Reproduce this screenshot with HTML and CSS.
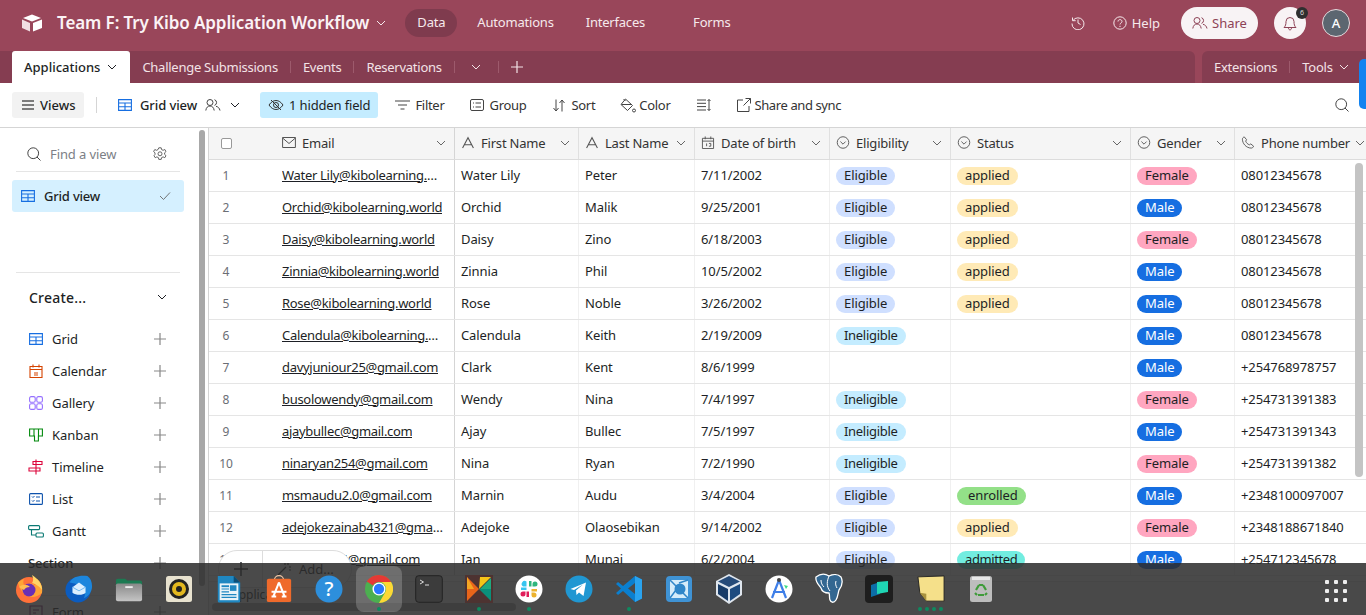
FILE: index.html
```html
<!DOCTYPE html>
<html lang="en">

<head>
    <meta charset="UTF-8">
    <meta name="viewport" content="width=device-width, initial-scale=1.0">
    <title>Team F: Try Kibo Application Workflow</title>
    <link rel="stylesheet" href="styles.css">
</head>

<body>
    <svg class="defs" width="0" height="0">
        <symbol id="chev" viewBox="0 0 12 12"><path d="M2 4l4 4 4-4" fill="none" stroke="currentColor" stroke-width="1"/></symbol>
        <symbol id="plus" viewBox="0 0 12 12"><path d="M6 0v12M0 6h12" fill="none" stroke="currentColor" stroke-width="1.2"/></symbol>
        <symbol id="gridicon" viewBox="0 0 14 12"><path d="M.6.6h12.8v10.8H.6zM.6 4h12.8M.6 7.7h12.8M7 4v7.4" fill="none" stroke="currentColor" stroke-width="1.1"/></symbol>
        <symbol id="texticon" viewBox="0 0 12 12"><path d="M1 11L6 1.5 11 11M2.8 8h6.4" fill="none" stroke="currentColor" stroke-width="1"/></symbol>
        <symbol id="selecticon" viewBox="0 0 14 14"><circle cx="7" cy="7" r="6.2" fill="none" stroke="currentColor"/><path d="M4.2 6l2.8 2.8L9.8 6" fill="none" stroke="currentColor"/></symbol>
        <symbol id="people" viewBox="0 0 16 14"><circle cx="5" cy="4.5" r="3" fill="none" stroke="currentColor"/><path d="M.8 12.5c.4-3 2-4.5 4.200-4.500s3.800 1.500 4.200 4.500M9.500 1.700a3 3 0 0 1 0 5.700M11 8.300c2 .4 3.500 1.800 4 4.200" fill="none" stroke="currentColor"/></symbol>
    </svg>

    <div class="app">
        <header class="topbar">
            <svg class="logo" viewBox="0 0 22 18" width="22" height="18">
                <path d="M11 .5L2 4l9 3.500L20 4z" fill="#fff"/>
                <path d="M12 9v8.500l9-3.500V5.500z" fill="#fff"/>
                <path d="M1 5.500V14l8 3.500V9z" fill="#f2dfe4"/>
            </svg>
            <span class="base-title">Team F: Try Kibo Application Workflow</span>
            <svg class="icon12 title-chev"><use href="#chev"/></svg>
            <nav class="topnav">
                <a class="active">Data</a>
                <a>Automations</a>
                <a>Interfaces</a>
                <i class="nav-sep"></i>
                <a>Forms</a>
            </nav>
            <div class="top-right">
                <svg class="history" viewBox="0 0 14 14" width="14" height="14"><path d="M2 4.500A6 6 0 1 1 1 7.500M1.500 1.500v3.200h3.200M7 3.500V7l2.500 1.500" fill="none" stroke="currentColor"/></svg>
                <span class="help">
                    <svg viewBox="0 0 14 14" width="14" height="14"><circle cx="7" cy="7" r="6.200" fill="none" stroke="currentColor"/><path d="M5 5.500C5 3 9 3 9 5.500 9 7 7 7 7 8.500M7 9.800v1.200" fill="none" stroke="currentColor"/></svg>
                    Help
                </span>
                <button class="share-btn"><svg class="people16"><use href="#people"/></svg>Share</button>
                <span class="bell">
                    <svg viewBox="0 0 14 16" width="14" height="16"><path d="M1 12.500h12c-1.500-1.500-2-3-2-6a4 4 0 0 0-8 0c0 3-.5 4.500-2 6zM5.500 13c0 2.500 3 2.500 3 0" fill="none" stroke="#8d4256"/></svg>
                    <span class="badge">6</span>
                </span>
                <span class="avatar">A</span>
            </div>
        </header>

        <div class="tabbar">
            <div class="tabs">
                <a class="tab active">Applications <svg class="icon12"><use href="#chev"/></svg></a>
                <a class="tab">Challenge Submissions</a>
                <a class="tab sep">Events</a>
                <a class="tab sep">Reservations</a>
                <a class="tab sep tab-more"><svg class="icon12"><use href="#chev"/></svg></a>
                <a class="tab sep tab-plus"><svg class="icon12"><use href="#plus"/></svg></a>
            </div>
            <div class="tabs-right">
                <a>Extensions</a>
                <a class="sep">Tools <svg class="icon12"><use href="#chev"/></svg></a>
            </div>
        </div>

        <div class="toolbar">
            <button class="views-btn">
                <svg viewBox="0 0 12 10" width="12" height="10"><path d="M0 1h12M0 5h12M0 9h12" stroke="#555" stroke-width="1.300"/></svg>
                Views
            </button>
            <i class="tool-sep"></i>
            <span class="gridview">
                <svg class="blue grid14"><use href="#gridicon"/></svg>
                Grid view
                <svg class="people16"><use href="#people"/></svg>
                <svg class="icon12"><use href="#chev"/></svg>
            </span>
            <span class="tool hidden-field">
                <svg viewBox="0 0 16 12" width="16" height="12"><path d="M1 6c2-3 4.500-4.500 7-4.500S13 3 15 6c-2 3-4.500 4.500-7 4.500S3 9 1 6z" fill="none" stroke="#333"/><circle cx="8" cy="6" r="2.500" fill="none" stroke="#333"/><path d="M3 1l10 10" stroke="#333"/></svg>
                1 hidden field
            </span>
            <span class="tool">
                <svg viewBox="0 0 15 10" width="15" height="10"><path d="M0 1h15M3 5h9M5.500 9h4" stroke="#444" stroke-width="1.200"/></svg>
                Filter
            </span>
            <span class="tool">
                <svg viewBox="0 0 14 12" width="14" height="12"><rect x=".5" y=".5" width="13" height="11" rx="1.500" fill="none" stroke="#444"/><path d="M3 4h1M5.500 4H11M3 8h1M5.500 8H11" stroke="#444"/></svg>
                Group
            </span>
            <span class="tool tool-sort">
                <svg viewBox="0 0 14 13" width="14" height="13"><path d="M4 .5v11M1.500 9L4 12l2.500-3M10 12.500v-11M7.500 4L10 1l2.500 3" fill="none" stroke="#444"/></svg>
                Sort
            </span>
            <span class="tool tool-color">
                <svg viewBox="0 0 16 15" width="16" height="15"><path d="M5.500 1l7 6.500-5 5L1 6.500zM3.500 1l2 2M1.500 6.500h10" fill="none" stroke="#444"/><circle cx="14" cy="12.500" r="1.500" fill="none" stroke="#444"/></svg>
                Color
            </span>
            <span class="tool tool-density">
                <svg viewBox="0 0 14 12" width="14" height="12"><path d="M0 1h9M0 4.300h9M0 7.600h9M0 11h9M12 .5v11M10.500 2L12 .5 13.500 2M10.500 10L12 11.500 13.500 10" fill="none" stroke="#444"/></svg>
            </span>
            <span class="tool tool-share">
                <svg viewBox="0 0 14 14" width="14" height="14"><path d="M6 2H.5v11.500H12V8M8.500.5h5v5M13.500.5L6.500 7.500" fill="none" stroke="#444"/></svg>
                Share and sync
            </span>
            <svg class="tool-search" viewBox="0 0 14 14" width="14" height="14"><circle cx="6.200" cy="6.200" r="5.400" fill="none" stroke="#444"/><path d="M10 10l3.500 3.500" stroke="#444"/></svg>
        </div>

        <div class="main">
            <aside class="sidebar">
                <div class="find">
                    <svg viewBox="0 0 14 14" width="14" height="14"><circle cx="6.200" cy="6.200" r="5.400" fill="none" stroke="#444"/><path d="M10 10l3.500 3.500" stroke="#444"/></svg>
                    <span>Find a view</span>
                    <svg class="gear" viewBox="0 0 14 14" width="14" height="14"><path d="M5.800.8h2.400l.4 1.800 1.500.7 1.700-.8 1.200 2-1.400 1.300v1.600l1.400 1.300-1.200 2-1.700-.8-1.500.7-.4 1.800H5.800l-.4-1.800-1.500-.7-1.700.8-1.200-2L2 7.400V5.800L.6 4.500l1.200-2 1.700.8 1.500-.7z" fill="none" stroke="#555" stroke-width=".9"/><circle cx="7" cy="6.800" r="2" fill="none" stroke="#555" stroke-width=".9"/></svg>
                </div>
                <a class="view-item">
                    <svg class="blue grid14"><use href="#gridicon"/></svg>
                    Grid view
                    <svg class="view-check" viewBox="0 0 12 10" width="12" height="10"><path d="M1 5l3.500 3.500L11 1.500" fill="none" stroke="#666" stroke-width=".9"/></svg>
                </a>
                <div class="create">
                    <div class="create-head">Create... <svg class="icon12"><use href="#chev"/></svg></div>
                    <div class="create-item"><svg class="blue grid14"><use href="#gridicon"/></svg><span>Grid</span><svg class="add"><use href="#plus"/></svg></div>
                    <div class="create-item"><svg viewBox="0 0 14 14" width="14" height="14"><path d="M1 2.500h12v11H1zM1 5.500h12M4 .5v3M10 .5v3M5 9h4M5 11h4" fill="none" stroke="#d54401" stroke-width="1.100"/></svg><span>Calendar</span><svg class="add"><use href="#plus"/></svg></div>
                    <div class="create-item"><svg viewBox="0 0 14 14" width="14" height="14"><g fill="none" stroke="#7c4dff" stroke-width="1.100" opacity=".8"><rect x=".6" y=".6" width="5.600" height="5.600" rx="1.500"/><rect x="7.800" y=".6" width="5.600" height="5.600" rx="1.500"/><rect x=".6" y="7.800" width="5.600" height="5.600" rx="1.500"/><rect x="7.800" y="7.800" width="5.600" height="5.600" rx="1.500"/></g></svg><span>Gallery</span><svg class="add"><use href="#plus"/></svg></div>
                    <div class="create-item"><svg viewBox="0 0 14 14" width="14" height="14"><path d="M.6 1h12.800v7h-4v5H5.500V8H.6zM5 1v7M9.500 1v7" fill="none" stroke="#048a0e" stroke-width="1.100"/></svg><span>Kanban</span><svg class="add"><use href="#plus"/></svg></div>
                    <div class="create-item"><svg class="wide" viewBox="0 0 16 16" width="16" height="16"><path d="M8 .5v15M5 2.500h9v3H5zM1 9h11v3H1z" fill="none" stroke="#dc043b" stroke-width="1.100"/></svg><span>Timeline</span><svg class="add"><use href="#plus"/></svg></div>
                    <div class="create-item"><svg viewBox="0 0 14 12" width="14" height="12"><rect x=".6" y=".6" width="12.800" height="10.800" rx="1" fill="none" stroke="#0d52ac" stroke-width="1.100"/><path d="M3 3.500l1 1 1.500-1.500M3 7.500l1 1L5.500 7M7 4h4M7 8h4" fill="none" stroke="#0d52ac"/></svg><span>List</span><svg class="add"><use href="#plus"/></svg></div>
                    <div class="create-item"><svg class="wide" viewBox="0 0 16 13" width="16" height="13"><rect x=".6" y=".6" width="11" height="4" rx="1" fill="none" stroke="#0b7a74" stroke-width="1.100"/><rect x="8" y="8" width="7.400" height="4" rx="1" fill="none" stroke="#0b7a74" stroke-width="1.100"/><path d="M3.500 4.600V10H8" fill="none" stroke="#0b7a74" stroke-width="1.100"/></svg><span>Gantt</span><svg class="add"><use href="#plus"/></svg></div>
                    <div class="create-item section"><span>Section</span><svg class="add"><use href="#plus"/></svg></div>
                    <div class="create-item form-item"><svg viewBox="0 0 14 14" width="14" height="14"><path d="M1 1h12v12H1zM4 5h6M4 8h3" fill="none" stroke="#7c1a6b" stroke-width="1.100"/></svg><span>Form</span><svg class="add"><use href="#plus"/></svg></div>
                </div>
                <i class="side-scroll"></i>
            </aside>

            <section class="grid">
                <div class="row head">
                    <div class="cell c-num"><i class="checkbox"></i></div>
                    <div class="cell c-email"><svg class="field" viewBox="0 0 14 12"><path d="M.6 1h12.800v10H.6zM.6 1.500L7 7l6.400-5.500" fill="none" stroke="currentColor"/></svg>Email<svg class="icon12 hchev"><use href="#chev"/></svg></div>
                    <div class="cell"><svg class="field"><use href="#texticon"/></svg>First Name<svg class="icon12 hchev"><use href="#chev"/></svg></div>
                    <div class="cell"><svg class="field"><use href="#texticon"/></svg>Last Name<svg class="icon12 hchev"><use href="#chev"/></svg></div>
                    <div class="cell"><svg class="field" viewBox="0 0 14 14"><path d="M1 2.500h12v11H1zM1 5.500h12M4 .5v3M10 .5v3M5.500 8v3M8 8h2v3H8" fill="none" stroke="currentColor"/></svg>Date of birth<svg class="icon12 hchev"><use href="#chev"/></svg></div>
                    <div class="cell"><svg class="field"><use href="#selecticon"/></svg>Eligibility<svg class="icon12 hchev"><use href="#chev"/></svg></div>
                    <div class="cell"><svg class="field"><use href="#selecticon"/></svg>Status<svg class="icon12 hchev"><use href="#chev"/></svg></div>
                    <div class="cell"><svg class="field"><use href="#selecticon"/></svg>Gender<svg class="icon12 hchev"><use href="#chev"/></svg></div>
                    <div class="cell"><svg class="field" viewBox="0 0 14 14"><path d="M3 1l2.500 3-1 1.500c.8 2 2 3.200 4 4l1.500-1 3 2.500c-.5 1.500-1.500 2-2.500 2C5 13 1 8 1 3.500 1 2.500 1.500 1.500 3 1z" fill="none" stroke="currentColor"/></svg>Phone number<svg class="icon12 hchev"><use href="#chev"/></svg></div>
                </div>

                <div class="row"><div class="cell c-num">1</div><div class="cell c-email"><a>Water Lily@kibolearning.world</a></div><div class="cell">Water Lily</div><div class="cell">Peter</div><div class="cell">7/11/2002</div><div class="cell"><span class="pill eligible">Eligible</span></div><div class="cell"><span class="pill applied">applied</span></div><div class="cell"><span class="pill female">Female</span></div><div class="cell">08012345678</div></div>
                <div class="row"><div class="cell c-num">2</div><div class="cell c-email"><a>Orchid@kibolearning.world</a></div><div class="cell">Orchid</div><div class="cell">Malik</div><div class="cell">9/25/2001</div><div class="cell"><span class="pill eligible">Eligible</span></div><div class="cell"><span class="pill applied">applied</span></div><div class="cell"><span class="pill male">Male</span></div><div class="cell">08012345678</div></div>
                <div class="row"><div class="cell c-num">3</div><div class="cell c-email"><a>Daisy@kibolearning.world</a></div><div class="cell">Daisy</div><div class="cell">Zino</div><div class="cell">6/18/2003</div><div class="cell"><span class="pill eligible">Eligible</span></div><div class="cell"><span class="pill applied">applied</span></div><div class="cell"><span class="pill female">Female</span></div><div class="cell">08012345678</div></div>
                <div class="row"><div class="cell c-num">4</div><div class="cell c-email"><a>Zinnia@kibolearning.world</a></div><div class="cell">Zinnia</div><div class="cell">Phil</div><div class="cell">10/5/2002</div><div class="cell"><span class="pill eligible">Eligible</span></div><div class="cell"><span class="pill applied">applied</span></div><div class="cell"><span class="pill male">Male</span></div><div class="cell">08012345678</div></div>
                <div class="row"><div class="cell c-num">5</div><div class="cell c-email"><a>Rose@kibolearning.world</a></div><div class="cell">Rose</div><div class="cell">Noble</div><div class="cell">3/26/2002</div><div class="cell"><span class="pill eligible">Eligible</span></div><div class="cell"><span class="pill applied">applied</span></div><div class="cell"><span class="pill male">Male</span></div><div class="cell">08012345678</div></div>
                <div class="row"><div class="cell c-num">6</div><div class="cell c-email"><a>Calendula@kibolearning.world</a></div><div class="cell">Calendula</div><div class="cell">Keith</div><div class="cell">2/19/2009</div><div class="cell"><span class="pill ineligible">Ineligible</span></div><div class="cell"></div><div class="cell"><span class="pill male">Male</span></div><div class="cell">08012345678</div></div>
                <div class="row"><div class="cell c-num">7</div><div class="cell c-email"><a>davyjuniour25@gmail.com</a></div><div class="cell">Clark</div><div class="cell">Kent</div><div class="cell">8/6/1999</div><div class="cell"></div><div class="cell"></div><div class="cell"><span class="pill male">Male</span></div><div class="cell">+254768978757</div></div>
                <div class="row"><div class="cell c-num">8</div><div class="cell c-email"><a>busolowendy@gmail.com</a></div><div class="cell">Wendy</div><div class="cell">Nina</div><div class="cell">7/4/1997</div><div class="cell"><span class="pill ineligible">Ineligible</span></div><div class="cell"></div><div class="cell"><span class="pill female">Female</span></div><div class="cell">+254731391383</div></div>
                <div class="row"><div class="cell c-num">9</div><div class="cell c-email"><a>ajaybullec@gmail.com</a></div><div class="cell">Ajay</div><div class="cell">Bullec</div><div class="cell">7/5/1997</div><div class="cell"><span class="pill ineligible">Ineligible</span></div><div class="cell"></div><div class="cell"><span class="pill male">Male</span></div><div class="cell">+254731391343</div></div>
                <div class="row"><div class="cell c-num">10</div><div class="cell c-email"><a>ninaryan254@gmail.com</a></div><div class="cell">Nina</div><div class="cell">Ryan</div><div class="cell">7/2/1990</div><div class="cell"><span class="pill ineligible">Ineligible</span></div><div class="cell"></div><div class="cell"><span class="pill female">Female</span></div><div class="cell">+254731391382</div></div>
                <div class="row"><div class="cell c-num">11</div><div class="cell c-email"><a>msmaudu2.0@gmail.com</a></div><div class="cell">Marnin</div><div class="cell">Audu</div><div class="cell">3/4/2004</div><div class="cell"><span class="pill eligible">Eligible</span></div><div class="cell"><span class="pill enrolled">enrolled</span></div><div class="cell"><span class="pill male">Male</span></div><div class="cell">+2348100097007</div></div>
                <div class="row"><div class="cell c-num">12</div><div class="cell c-email"><a>adejokezainab4321@gmail.com</a></div><div class="cell">Adejoke</div><div class="cell">Olaosebikan</div><div class="cell">9/14/2002</div><div class="cell"><span class="pill eligible">Eligible</span></div><div class="cell"><span class="pill applied">applied</span></div><div class="cell"><span class="pill female">Female</span></div><div class="cell">+2348188671840</div></div>
                <div class="row"><div class="cell c-num">13</div><div class="cell c-email"><a>ian.munai5@gmail.com</a></div><div class="cell">Ian</div><div class="cell">Munai</div><div class="cell">6/2/2004</div><div class="cell"><span class="pill eligible">Eligible</span></div><div class="cell"><span class="pill admitted">admitted</span></div><div class="cell"><span class="pill male">Male</span></div><div class="cell">+254712345678</div></div>

                <div class="grid-foot">Applicants</div>
                <div class="add-pill">
                    <span class="add-plus"><svg class="icon14"><use href="#plus"/></svg></span>
                    <span class="add-text">
                        <svg viewBox="0 0 14 14" width="14" height="14"><path d="M1 13l8-8M8 1v2M11 1v2M12 5h2M12 8h2" fill="none" stroke="#333" stroke-width="1.200"/></svg>
                        Add...
                    </span>
                </div>
                <i class="grid-scroll"></i>
                <i class="h-scroll"></i>
            </section>
        </div>

        <i class="support-tab"></i>

        <footer class="dock">
            <span class="slot"><svg viewBox="0 0 28 28"><circle cx="14" cy="15" r="13" fill="#ff7139"/><path d="M3 8c3 12 14 19 24 10 1-6-1-11-5-14 1 3 0 5-2 6C16 7 12 8 10 11 8 9 8 7 9 4 6 5 4 6 3 8z" fill="#ffa436"/><path d="M17 0c5 3 10 8 10 15-3-4-6-6-10-7 2-3 1-5 0-8z" fill="#ffd567"/><circle cx="14" cy="15" r="6.500" fill="#6a2fb5"/><path d="M4 12c4-3 8-3 11 0-3 0-5 1-6 3z" fill="#ffbd4f"/></svg></span>
            <span class="slot"><svg viewBox="0 0 30 30"><circle cx="14" cy="16" r="13.500" fill="#0b5cc0"/><path d="M5 8C8 2 15 0 24 1c3 2 5 6 5 11 0 6-4 11-9 13C24 18 20 10 5 8z" fill="#1c86dd"/><path d="M8 13l7-5 7 5v6c-3 3-10 3-14 0z" fill="#dcefff"/><path d="M8 13l7 4 7-4" fill="none" stroke="#6db6ee"/></svg></span>
            <span class="slot"><svg viewBox="0 0 30 28"><path d="M1 5a2 2 0 0 1 2-2h8l2 2h14a2 2 0 0 1 2 2v4H1z" fill="#1c7a52"/><rect x="1" y="8" width="28" height="19" rx="2" fill="url(#folder)"/><rect x="11" y="11" width="8" height="2" fill="#eee"/><defs><linearGradient id="folder" x1="0" y1="0" x2="0" y2="1"><stop offset="0" stop-color="#888"/><stop offset="1" stop-color="#c4c4c4"/></linearGradient></defs></svg></span>
            <span class="slot"><svg viewBox="0 0 28 28"><rect x="1" y="1" width="26" height="26" rx="2.500" fill="#e8e2cf"/><circle cx="14" cy="14" r="10" fill="#222"/><circle cx="14" cy="14" r="7" fill="#e3b81f"/><circle cx="14" cy="14" r="3" fill="#222"/></svg></span>
            <span class="slot"><svg viewBox="0 0 28 30"><path d="M2 1h17l7 7v20a1.500 1.500 0 0 1-1.500 1.500h-21A1.500 1.500 0 0 1 2 28z" fill="#1f87c1"/><path d="M19 1l7 7h-7z" fill="#0b4e77"/><rect x="4" y="9" width="20" height="18" fill="#e9f3f8"/><rect x="6" y="11" width="8" height="2" fill="#1f87c1"/><rect x="15" y="11" width="7" height="6" fill="#1f87c1"/><path d="M6 15h8M6 18h8M6 21h16M6 24h16" stroke="#1f87c1" stroke-width="1.300"/></svg></span>
            <span class="slot"><svg viewBox="0 0 28 30"><path d="M9 6c0-7 10-7 10 0" fill="none" stroke="#f4c7a3" stroke-width="1.300"/><rect x="1" y="4" width="26" height="25" rx="2" fill="#ef6a2b"/><path d="M14 8l-6 15M14 8l6 15M6 18h16M6 23h5M17 23h5" fill="none" stroke="#fff" stroke-width="2.200"/></svg></span>
            <span class="slot"><svg viewBox="0 0 28 28"><circle cx="14" cy="14" r="13.500" fill="#2d8fdc"/><text class="dock-q" x="14" y="21" text-anchor="middle">?</text></svg></span>
            <span class="slot running on"><svg viewBox="0 0 30 30"><circle cx="15" cy="15" r="15" fill="#4caf50"/><path d="M15 0a15 15 0 0 1 13 7.500H15a7.500 7.500 0 0 0-6.500 3.750L2 7a15 15 0 0 1 13-7z" fill="#e53935"/><path d="M28 7.500A15 15 0 0 1 15 30l6.500-11.250A7.500 7.500 0 0 0 15 7.500z" fill="#fdd835"/><circle cx="15" cy="15" r="7" fill="#fff"/><circle cx="15" cy="15" r="5.500" fill="#2979ff"/></svg></span>
            <span class="slot"><svg viewBox="0 0 28 28"><rect x=".7" y=".7" width="26.600" height="26.600" rx="3" fill="#3c3c3c" stroke="#222"/><path d="M5 5l3.500 2L5 9M10 10h4" fill="none" stroke="#ddd"/></svg></span>
            <span class="slot running"><svg viewBox="0 0 28 28"><rect width="28" height="28" fill="#4d3331"/><path d="M2 2l12 12L2 26z" fill="#e8651a"/><path d="M2 2v12h7z" fill="#f5a623"/><path d="M14 14L26 2H15z" fill="#f5c518"/><path d="M14 14l12 12V14z" fill="#0a8f7a"/><path d="M26 3v11H15z" fill="#1fa87f"/></svg></span>
            <span class="slot running"><svg viewBox="0 0 28 28"><circle cx="14" cy="14" r="13.500" fill="#fff"/><path d="M11.500 6.500v5h-3.500a2.500 2.500 0 0 1 3.500-5z" fill="#36c5f0"/><path d="M6 12.500h5.500v2.500H6z" fill="#36c5f0"/><path d="M16.500 6v5.500H14V6z" fill="#2eb67d"/><path d="M17.500 11.500V9a2.500 2.500 0 1 1 2.500 2.500z" fill="#2eb67d"/><path d="M22 16.500h-5.500V14H22z" fill="#ecb22e"/><path d="M16.500 17.500H19a2.500 2.500 0 1 1-2.500 2.500z" fill="#ecb22e"/><path d="M11.500 22V16.500H14V22z" fill="#e01e5a"/><path d="M10.500 16.500V19a2.500 2.500 0 1 1-2.500-2.500z" fill="#e01e5a"/></svg></span>
            <span class="slot"><svg viewBox="0 0 28 28"><circle cx="14" cy="14" r="13.500" fill="#2097d2"/><path d="M5.500 14L21 7.500 18.500 21l-4.500-3.500-2.500 2.500-.5-4.500 7-6-9 5.500z" fill="#fff"/></svg></span>
            <span class="slot running"><svg viewBox="0 0 28 28"><path d="M20 1l7 3.500v19L20 27 8 16l-5 4-2-2 5-4.500L1 9l2-2 5 4z" fill="#0a7fcf"/><path d="M20 1l7 3.500v19L20 27z" fill="#2aa3ee"/><path d="M20 8l-7 5.500L20 19z" fill="#4a4a4a"/></svg></span>
            <span class="slot"><svg viewBox="0 0 28 28"><rect x="1" y="1" width="26" height="26" rx="4" fill="#3f93d5"/><rect x="5" y="5" width="18" height="18" fill="#d5ecfa"/><circle cx="15" cy="14" r="5.500" fill="#2f86c9"/><path d="M5 5l7 7M23 5l-9 3M5 23l6-8M23 23l-7-7" stroke="#2f86c9" stroke-width="1.500"/></svg></span>
            <span class="slot"><svg class="big" viewBox="0 0 30 32"><path d="M15 1l13 7v14l-13 9-13-9V8z" fill="#dfe6ee"/><path d="M15 3l11 5.500L15 14 4 8.500z" fill="#264b79"/><path d="M4 11l10 5v12L4 21z" fill="#183c68"/><path d="M26 11l-10 5v12l10-7z" fill="#1d4b80"/></svg></span>
            <span class="slot"><svg viewBox="0 0 28 28"><circle cx="14" cy="14" r="13.500" fill="#fff"/><path d="M14 5l-7 18M14 5l7 18M8 17h12" fill="none" stroke="#3f7fe8" stroke-width="2.200"/><path d="M19 10l4 1-2 3z" fill="#3ddc84"/><circle cx="14" cy="5" r="2" fill="#444"/></svg></span>
            <span class="slot"><svg class="big" viewBox="0 0 30 32"><path d="M2 4c5-4 10-3 13-1 4-2 9-2 12 1 2 4 1 9-2 13-1 3-1 7-3 10-2 3-5 3-6 0-1-2 0-5-1-7-3 0-7-1-8-5C5 12 1 9 2 4z" fill="#336791" stroke="#fff" stroke-width="1.300"/><path d="M15 3c-2 5-3 10 1 15M22 8c-1 3 0 5 1 7M7 7c0 3 1 5 3 7" fill="none" stroke="#fff"/></svg></span>
            <span class="slot"><svg viewBox="0 0 28 28"><rect width="28" height="28" rx="4" fill="#1e1e1e"/><path d="M6 10l9-3v12l-9 3z" fill="#0c6ea8"/><path d="M12 7l11-1v11l-11 2z" fill="#1fd6b4"/></svg></span>
            <span class="slot sticky running"><svg viewBox="0 0 30 30"><path d="M1 2l28-1v27H10L3 19z" fill="#f5e08a" stroke="#222"/><path d="M3 19l7 1v8z" fill="#a8923f"/></svg></span>
            <span class="slot"><svg viewBox="0 0 24 28"><rect x="1" y="1" width="22" height="26" rx="2.500" fill="#bdbdbd"/><rect x="3" y="2" width="18" height="3" fill="#e8e8e8"/><g fill="none" stroke="#3f9b3a" stroke-width="2.200"><path d="M10 10l-3 5M14 10l3 5M9 20h6M6 18l2 2M18 18l-2 2M10 10h4"/></g></svg></span>
            <span class="apps-grid"><i></i><i></i><i></i><i></i><i></i><i></i><i></i><i></i><i></i></span>
        </footer>
    </div>
</body>

</html>
```

FILE: styles.css
```css
* {
    box-sizing: border-box;
}

html,
body {
    margin: 0;
    height: 100%;
    overflow: hidden;
}

body {
    font-family: "Noto Sans", "Open Sans", sans-serif;
    font-size: 13px;
    color: #1d1f25;
    background: #fff;
}

.defs {
    position: absolute;
}

.app {
    position: relative;
    height: 100vh;
    display: flex;
    flex-direction: column;
    overflow: hidden;
}

svg {
    flex: none;
}

.icon12 {
    width: 12px;
    height: 12px;
}

.icon14 {
    width: 14px;
    height: 14px;
}

.grid14 {
    width: 14px;
    height: 12px;
}

.people16 {
    width: 16px;
    height: 14px;
}

.blue {
    color: #166ee1;
}

/* top bar */
.topbar {
    height: 51px;
    flex: none;
    display: flex;
    align-items: center;
    padding: 0 0 6px 21px;
    background: #99465a;
    color: #f6e9ec;
}

.base-title {
    margin-left: 14px;
    font-size: 17px;
    font-weight: 600;
    letter-spacing: -0.1px;
    color: #fbf3f5;
}

.title-chev {
    margin-left: 6px;
}

.topnav {
    display: flex;
    align-items: center;
    margin-left: 18px;
    letter-spacing: -0.2px;
}

.topnav a {
    padding: 0 12px;
    height: 28px;
    line-height: 26px;
    margin-right: 8px;
    border-radius: 14px;
}

.topnav a.active {
    background: #7f3b4e;
}

.nav-sep {
    width: 1px;
    height: 20px;
    margin: 0 15px 0 0;
}

.top-right {
    margin-left: auto;
    display: flex;
    align-items: center;
    padding-right: 16px;
}

.help {
    display: flex;
    align-items: center;
    gap: 5px;
    margin-left: 28px;
}

.share-btn {
    display: flex;
    align-items: center;
    justify-content: center;
    gap: 4px;
    width: 77px;
    height: 32px;
    margin-left: 21px;
    border: 0;
    border-radius: 16px;
    background: #f8f3f5;
    color: #8d4256;
    font: inherit;
}

.bell {
    position: relative;
    display: flex;
    align-items: center;
    justify-content: center;
    width: 32px;
    height: 32px;
    margin-left: 16px;
    border-radius: 50%;
    background: #f8f3f5;
}

.badge {
    position: absolute;
    top: 0;
    right: -2px;
    width: 12px;
    height: 12px;
    border-radius: 50%;
    background: #2f2f2f;
    color: #ddd;
    font-size: 7px;
    line-height: 12px;
    text-align: center;
}

.avatar {
    width: 28px;
    height: 28px;
    margin-left: 16px;
    border: 1px solid #e6dadd;
    border-radius: 50%;
    background: #5c6670;
    color: #fff;
    font-size: 13px;
    font-weight: 500;
    line-height: 26px;
    text-align: center;
}

/* table tabs */
.tabbar {
    height: 32px;
    flex: none;
    display: flex;
    background: #99465a;
    color: #f3e3e7;
    letter-spacing: -0.26px;
}

.tabs {
    flex: 1;
    display: flex;
    align-items: center;
    padding-left: 12px;
    background: #853d51;
    border-top-right-radius: 6px;
}

.tab {
    display: flex;
    align-items: center;
    height: 32px;
    padding: 0 12px;
    position: relative;
}

.tab.sep {
    padding: 0 12px 0 13px;
}

.tab.active {
    gap: 6px;
    background: #fff;
    color: #1d1f25;
    font-weight: 500;
    letter-spacing: 0;
    border-radius: 3px 3px 0 0;
}

.tab.tab-more {
    padding: 0 16px;
}

.tab.tab-plus {
    padding-left: 13px;
}

.tab.sep::before,
.tabs-right .sep::before {
    content: "";
    position: absolute;
    left: 0;
    top: 10px;
    height: 12px;
    width: 1px;
    background: #9d5a6c;
}

.tabs-right {
    flex: none;
    width: 164px;
    margin-left: 7px;
    display: flex;
    align-items: center;
    padding-left: 12px;
    background: #853d51;
    border-top-left-radius: 6px;
}

.tabs-right a {
    display: flex;
    align-items: center;
    gap: 5px;
    position: relative;
    height: 32px;
}

.tabs-right .sep {
    margin-left: 12px;
    padding-left: 13px;
}

/* view toolbar */
.toolbar {
    height: 45px;
    flex: none;
    display: flex;
    align-items: center;
    padding: 0 17px 0 12px;
    border-bottom: 1px solid #d5d5d5;
    color: #333;
}

.views-btn {
    display: flex;
    align-items: center;
    gap: 6px;
    width: 72px;
    height: 26px;
    padding-left: 10px;
    border: 0;
    border-radius: 3px;
    background: #f2f2f2;
    color: #1d1f25;
    font: inherit;
    font-weight: 500;
}

.tool-sep {
    width: 1px;
    height: 16px;
    margin: 0 21px 0 12px;
    background: #d5d5d5;
}

.gridview {
    display: flex;
    align-items: center;
    gap: 8px;
    font-weight: 500;
    letter-spacing: -0.1px;
    color: #1d1f25;
    margin-right: 19px;
}

.gridview .people16 {
    color: #444;
}

.tool {
    display: flex;
    align-items: center;
    gap: 5px;
    height: 26px;
    margin-right: 26px;
    letter-spacing: -0.3px;
}

.hidden-field {
    padding: 0 8px;
    margin-right: 17px;
    border-radius: 3px;
    background: #c4ecff;
    color: #1d1f25;
    letter-spacing: -0.15px;
}

.tool-sort {
    margin-right: 25px;
}

.tool-color {
    gap: 3px;
}

.tool-density {
    margin-right: 26px;
}

.tool-share {
    gap: 4px;
    letter-spacing: -0.4px;
}

.tool-search {
    margin-left: auto;
}

/* main area */
.main {
    flex: 1;
    min-height: 0;
    display: flex;
}

.sidebar {
    position: relative;
    width: 209px;
    flex: none;
    padding: 3px 24px 0 12px;
    border-right: 1px solid #d5d5d5;
}

.find {
    display: flex;
    align-items: center;
    gap: 9px;
    height: 41px;
    margin: 0 4px;
    padding: 6px 13px 0 11px;
    border-bottom: 1px solid #e5e5e5;
    color: #7c7f86;
    letter-spacing: -0.1px;
}

.gear {
    margin-left: auto;
}

.view-item {
    display: flex;
    align-items: center;
    gap: 9px;
    height: 32px;
    margin-top: 8px;
    padding: 0 13px 0 9px;
    border-radius: 3px;
    background: #d5f0ff;
    font-weight: 500;
    letter-spacing: -0.2px;
}

.view-check {
    margin-left: auto;
}

.create {
    margin: 60px 4px 0;
    border-top: 1px solid #e5e5e5;
}

.create-head {
    display: flex;
    align-items: center;
    justify-content: space-between;
    height: 50px;
    padding: 0 12px 2px 13px;
    font-size: 14px;
    font-weight: 500;
    letter-spacing: 0.2px;
}

.create-item {
    display: flex;
    align-items: center;
    height: 32px;
    padding: 0 14px 0 12px;
    letter-spacing: -0.05px;
}

.create-item span {
    margin-left: 9px;
}

.create-item svg:first-child {
    margin-left: 1px;
}

.create-item svg.wide {
    margin-left: 0;
    margin-right: -1px;
}

.add {
    width: 12px;
    height: 12px;
    margin-left: auto;
    color: #888;
}

.section {
    font-weight: 500;
}

.section span {
    margin-left: 0;
}

.form-item {
    margin-top: 16px;
    border-top: 1px solid #e5e5e5;
}

.side-scroll {
    position: absolute;
    top: 2px;
    left: 199px;
    width: 6px;
    height: 456px;
    border-radius: 3px;
    background: #a8a8a8;
}

/* records */
.grid {
    position: relative;
    flex: 1;
    min-width: 0;
    overflow: hidden;
}

.row {
    display: grid;
    grid-template-columns: 73px 173px 124px 116px 135px 121px 180px 104px 140px;
    height: 32px;
    border-bottom: 1px solid #e5e5e5;
    letter-spacing: -0.1px;
}

.row.head {
    background: #f5f5f5;
    border-bottom-color: #dcdcdc;
    color: #333;
    letter-spacing: -0.2px;
}

.cell {
    display: flex;
    align-items: center;
    min-width: 0;
    padding: 0 6px 2px;
    border-right: 1px solid #f0f0f0;
    white-space: nowrap;
    overflow: hidden;
}

.head .cell {
    padding-right: 7px;
    border-right-color: #e0e0e0;
}

.c-num,
.head .c-num {
    justify-content: center;
    padding: 0 39px 0 0;
    border-right: 0;
    color: #6b6e75;
    font-size: 12px;
}

.c-email {
    padding: 0 9px 2px 0;
    border-right-color: #d5d5d5 !important;
}

.c-email a {
    overflow: hidden;
    text-overflow: ellipsis;
    text-decoration: underline;
    letter-spacing: -0.3px;
}

.checkbox {
    width: 11px;
    height: 11px;
    border: 1px solid #999;
    border-radius: 2px;
    background: #fff;
}

.field {
    width: 14px;
    height: 13px;
    margin-right: 6px;
    color: #555;
}

.hchev {
    margin-left: auto;
    color: #666;
}

.cell:last-child .hchev {
    margin-right: 1px;
}

.pill {
    height: 18px;
    margin-top: 2px;
    line-height: 16px;
    padding: 0 8px;
    border-radius: 9px;
}

.eligible {
    background: #cfdfff;
}

.ineligible {
    background: #c4ecff;
    letter-spacing: -0.3px;
}

.applied {
    background: #ffeab6;
}

.enrolled {
    background: #93e088;
    padding: 0 8px 0 11px;
}

.admitted {
    background: #72ede0;
    letter-spacing: -0.4px;
}

.male {
    background: #166ee1;
    color: #fff;
}

.female {
    background: #ffa6c0;
}

.grid-foot {
    height: 40px;
    margin-top: 5px;
    padding: 4px 0 0 22px;
    border-top: 1px solid #e0e0e0;
    background: #f5f5f5;
    font-size: 12px;
}

.add-pill {
    position: absolute;
    left: 9px;
    top: 422px;
    display: flex;
    align-items: center;
    width: 134px;
    height: 38px;
    border: 1px solid #ddd;
    border-radius: 19px;
    background: #fff;
}

.add-plus {
    display: flex;
    justify-content: center;
    align-items: center;
    width: 44px;
    height: 100%;
    border-right: 1px solid #ddd;
}

.add-text {
    display: flex;
    align-items: center;
    gap: 8px;
    margin-left: 14px;
}

.grid-scroll {
    position: absolute;
    top: 35px;
    right: 3px;
    width: 8px;
    height: 314px;
    border-radius: 4px;
    background: #c4c4c4;
}

.h-scroll {
    position: absolute;
    left: 3px;
    top: 475px;
    width: 304px;
    height: 8px;
    border-radius: 4px;
    background: #aaa;
}

.support-tab {
    position: absolute;
    right: 0;
    top: 59px;
    width: 7px;
    height: 50px;
    border-radius: 5px 0 0 5px;
    background: #1283f0;
}

/* ubuntu dock */
.dock {
    position: absolute;
    left: 0;
    right: 0;
    bottom: 0;
    height: 52px;
    display: flex;
    padding-left: 4px;
    background: rgba(44, 44, 44, 0.86);
}

.slot {
    position: relative;
    display: flex;
    align-items: center;
    justify-content: center;
    width: 50px;
    height: 52px;
}

.slot svg {
    position: relative;
    width: 28px;
    height: 28px;
}

.slot svg.big {
    width: 32px;
    height: 32px;
}

.slot.on::before {
    content: "";
    position: absolute;
    left: 2px;
    top: 3px;
    width: 46px;
    height: 46px;
    border-radius: 8px;
    background: rgba(255, 255, 255, 0.2);
}

.running::after {
    content: "";
    position: absolute;
    left: 23px;
    bottom: 4px;
    width: 4px;
    height: 4px;
    border-radius: 50%;
    background: #0e8a5f;
}

.sticky {
    margin-left: 2px;
}

.sticky::after {
    left: 12px;
    box-shadow: 7px 0 #0e8a5f, 14px 0 #0e8a5f, 21px 0 #0e8a5f;
}

.dock-q {
    font-size: 20px;
    font-weight: 500;
    fill: #fff;
}

.apps-grid {
    margin: 17px 19px 0 auto;
    display: grid;
    grid-template-columns: repeat(3, 4px);
    grid-auto-rows: 4px;
    gap: 5px;
    height: 20px;
}

.apps-grid i {
    border-radius: 1px;
    background: #eee;
}
```
